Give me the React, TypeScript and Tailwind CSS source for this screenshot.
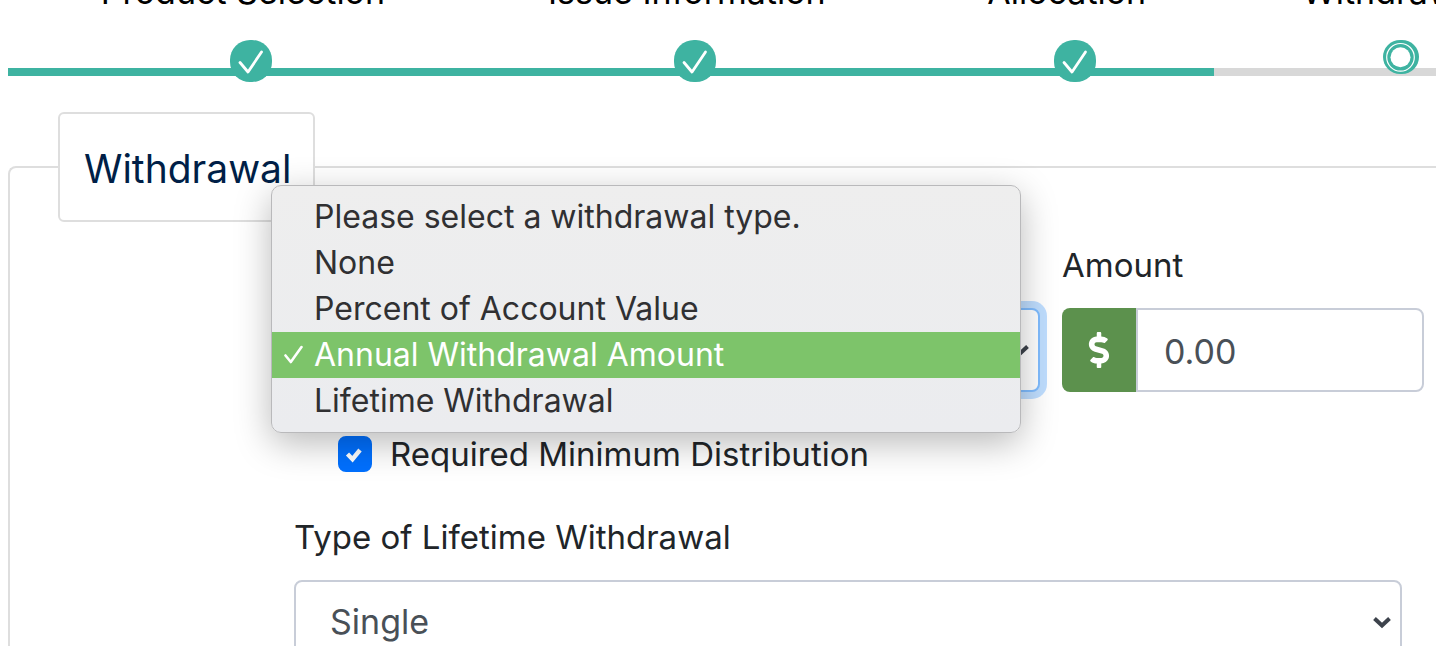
import { useState } from 'react'
import { FaDollarSign } from 'react-icons/fa'
import clsx from 'clsx'

type Step = {
  label: string
  status: 'done' | 'current'
  className: string
}

const STEPS: Step[] = [
  { label: 'Product Selection', status: 'done', className: 'pl-10' },
  { label: 'Issue Information', status: 'done', className: '' },
  { label: 'Allocation', status: 'done', className: '' },
  { label: 'Withdrawal', status: 'current', className: '' },
]

const WITHDRAWAL_TYPES = [
  'Please select a withdrawal type.',
  'None',
  'Percent of Account Value',
  'Annual Withdrawal Amount',
  'Lifetime Withdrawal',
]

function DoneIcon() {
  return (
    <svg width="42" height="42" viewBox="0 0 42 42" className="shrink-0" aria-hidden="true">
      <rect width="42" height="42" rx="20" fill="#3eb3a1" />
      <path
        d="M10 22.5L18 32L31.5 12"
        fill="none"
        stroke="#fff"
        strokeWidth="2.8"
        strokeLinecap="round"
        strokeLinejoin="round"
      />
    </svg>
  )
}

function CurrentIcon() {
  return (
    <svg width="36" height="34" viewBox="0 0 36 34" className="shrink-0" aria-hidden="true">
      <rect width="36" height="34" rx="17" fill="#3eb3a1" />
      <circle cx="17.5" cy="17.3" r="13.8" fill="none" stroke="#fff" strokeWidth="1.2" />
      <circle cx="17.5" cy="17.3" r="10" fill="#fff" />
    </svg>
  )
}

function Chevron() {
  return (
    <svg
      width="20"
      height="14"
      viewBox="0 0 20 14"
      className="pointer-events-none absolute top-1/2 right-2.5 -translate-y-1/2"
      aria-hidden="true"
    >
      <path d="M2.5 3.5L10 10.5L17.5 3.5" fill="none" stroke="#3d434c" strokeWidth="4" />
    </svg>
  )
}

function StepTracker() {
  return (
    // the track runs on past the right edge of the page
    <ol className="-mt-7 ml-2 grid w-[110%] grid-cols-[446fr_482fr_278fr_374fr] pb-3">
      {STEPS.map((step) => (
        <li
          key={step.label}
          className={clsx(
            'flex flex-col items-center border-b-8',
            step.status === 'done' ? 'border-[#3eb3a1]' : 'border-[#d8d8d8]',
            step.className
          )}
        >
          <span className="mb-7 h-10 pr-4 text-[34px] leading-10 whitespace-nowrap text-black">{step.label}</span>
          {/* icon hangs over the track */}
          <span className="flex h-7 items-start">{step.status === 'done' ? <DoneIcon /> : <CurrentIcon />}</span>
        </li>
      ))}
    </ol>
  )
}

function WithdrawalTypeMenu({ value, onSelect }: { value: string; onSelect: (type: string) => void }) {
  return (
    <ul
      role="listbox"
      aria-label="Withdrawal types"
      className="absolute -top-[123px] -left-[23px] z-10 w-[750px] rounded-[10px] border border-[#b9b9bb] bg-linear-to-b from-[#eeeeee] to-[#ebecef] py-2 shadow-[0_10px_36px_rgba(0,0,0,0.28)]"
    >
      {WITHDRAWAL_TYPES.map((type) => {
        const selected = type === value
        return (
          <li key={type} role="option" aria-selected={selected}>
            <button
              type="button"
              onClick={() => onSelect(type)}
              className={clsx(
                'flex h-[46px] w-full items-center pl-3 text-left text-[32px]',
                selected ? 'bg-[#7dc46a] text-white' : 'text-[#303032]'
              )}
            >
              <span className="flex w-[30px] shrink-0">
                {selected && (
                  <svg width="20" height="20" viewBox="0 0 20 20" aria-hidden="true">
                    <path
                      d="M1.5 10.5L6.8 17L17.5 2"
                      fill="none"
                      stroke="currentColor"
                      strokeWidth="2.6"
                      strokeLinecap="round"
                      strokeLinejoin="round"
                    />
                  </svg>
                )}
              </span>
              {type}
            </button>
          </li>
        )
      })}
    </ul>
  )
}

export default function App() {
  const [type, setType] = useState('Annual Withdrawal Amount')
  const [amount, setAmount] = useState('0.00')
  const [minimumDistribution, setMinimumDistribution] = useState(true)

  return (
    <main className="h-screen overflow-hidden bg-white font-['Inter','Liberation_Sans',sans-serif] text-[34px] leading-[54px] text-[#212529]">
      <StepTracker />

      <form className="mt-6 ml-2">
        <fieldset className="rounded-tl-lg border-2 border-r-0 border-[#dedede] pb-10">
          <legend className="ml-12 rounded-md border-2 border-[#dedede] bg-white pt-7 pr-[22px] pb-6 pl-6 text-[39px] text-[#001f47]">
            Withdrawal
          </legend>

          <div className="pt-4 pr-3 pl-[284px]">
            <div className="flex items-end gap-[22px]">
              <div className="relative min-w-0 flex-1">
                <select
                  aria-label="Withdrawal type"
                  value={type}
                  onChange={(e) => setType(e.target.value)}
                  className="block h-[84px] w-full appearance-none rounded-lg border-2 border-[#80bdff] bg-white px-[34px] text-[#495057] shadow-[0_0_0_7px_rgba(0,123,255,0.25)] outline-none"
                >
                  {WITHDRAWAL_TYPES.map((option) => (
                    <option key={option}>{option}</option>
                  ))}
                </select>
                <Chevron />
                <WithdrawalTypeMenu value={type} onSelect={setType} />
              </div>

              <div className="w-[362px] shrink-0">
                <label htmlFor="amount" className="mb-4 block text-[33px] leading-[54px]">
                  Amount
                </label>
                <div className="flex h-[84px]">
                  <span className="flex w-[74px] shrink-0 items-center justify-center rounded-l-lg bg-[#5c914d] text-4xl text-white">
                    <FaDollarSign aria-hidden="true" />
                  </span>
                  <input
                    id="amount"
                    type="text"
                    inputMode="decimal"
                    value={amount}
                    onChange={(e) => setAmount(e.target.value)}
                    className="w-full min-w-0 rounded-r-lg border-2 border-[#c8cdd8] px-[26px] pt-1 text-[#495057] outline-none"
                  />
                </div>
              </div>
            </div>

            <div className="mt-[35px] flex items-center gap-[18px] pl-11">
              <span className="grid h-9 w-[34px] shrink-0">
                <input
                  id="minimum-distribution"
                  type="checkbox"
                  checked={minimumDistribution}
                  onChange={(e) => setMinimumDistribution(e.target.checked)}
                  className="peer col-start-1 row-start-1 size-full appearance-none rounded-lg border-2 border-[#adb5bd] checked:border-[#0070ff] checked:bg-[#0070ff]"
                />
                <svg
                  viewBox="0 0 34 36"
                  className="pointer-events-none invisible col-start-1 row-start-1 size-full peer-checked:visible"
                  aria-hidden="true"
                >
                  <path d="M9.5 18L14.5 23.2L22 14" fill="none" stroke="#fff" strokeWidth="4.4" />
                </svg>
              </span>
              <label htmlFor="minimum-distribution" className="text-[33px] leading-[54px]">
                Required Minimum Distribution
              </label>
            </div>

            <div className="mt-[29px] pr-[22px]">
              <label htmlFor="lifetime-type" className="mb-4 block text-[33px] leading-[54px]">
                Type of Lifetime Withdrawal
              </label>
              <div className="relative">
                <select
                  id="lifetime-type"
                  defaultValue="Single"
                  className="block h-[84px] w-full appearance-none rounded-lg border-2 border-[#c8cdd8] bg-white px-[34px] text-[#495057] outline-none"
                >
                  <option>Single</option>
                  <option>Joint</option>
                </select>
                <Chevron />
              </div>
            </div>
          </div>
        </fieldset>
      </form>
    </main>
  )
}
